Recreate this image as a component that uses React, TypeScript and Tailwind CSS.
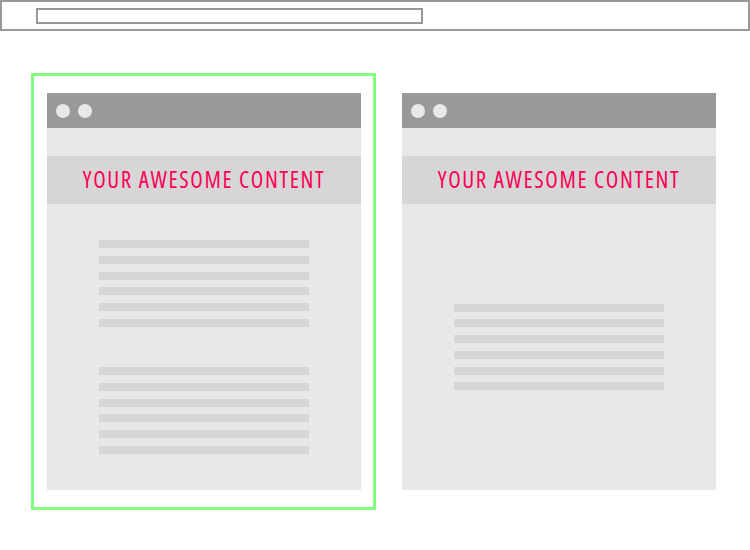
const groupA = [6, 6]
const groupB = [6]

function Lines({ groups }: { groups: number[] }) {
  return (
    <div className="flex flex-1 flex-col items-center justify-center gap-10">
      {groups.map((count, g) => (
        <div key={g} className="flex flex-col gap-[7.8px]">
          {Array.from({ length: count }).map((_, i) => (
            <div key={i} className="h-[8px] w-[210px] bg-[#d6d6d6]" />
          ))}
        </div>
      ))}
    </div>
  )
}

function Panel({ groups }: { groups: number[] }) {
  return (
    <div className="flex h-[397px] w-[314px] flex-col bg-[#e8e8e8]">
      <div className="flex h-[35px] shrink-0 items-center gap-2 bg-[#999999] pl-[9px]">
        <span className="h-[14px] w-[14px] rounded-full bg-[#e8e8e8]" />
        <span className="h-[14px] w-[14px] rounded-full bg-[#e8e8e8]" />
      </div>
      <div className="mt-[28px] flex h-[48px] shrink-0 items-center justify-center bg-[#d6d6d6]">
        <span
          className="-mt-[2px] text-[23px] font-medium leading-none tracking-[1.6px] text-[#ff0057] [font-stretch:condensed]"
          style={{ fontFamily: '"Open Sans", "Liberation Sans", sans-serif' }}
        >
          YOUR AWESOME CONTENT
        </span>
      </div>
      <Lines groups={groups} />
    </div>
  )
}

export default function App() {
  return (
    <div className="h-[550px] w-[750px] overflow-hidden bg-white">
      <div className="flex h-[31px] w-[750px] items-center border-2 border-[#999999] pl-[34px]">
        <div className="h-[16px] w-[387px] border-2 border-[#999999]" />
      </div>
      <div className="mt-[42px] flex items-start pl-[31px]">
        <div className="border-[3px] border-[#80ff80] pb-[17px] pl-[13px] pr-[12px] pt-[17px]">
          <Panel groups={groupA} />
        </div>
        <div className="ml-[26px] mt-[20px]">
          <Panel groups={groupB} />
        </div>
      </div>
    </div>
  )
}
